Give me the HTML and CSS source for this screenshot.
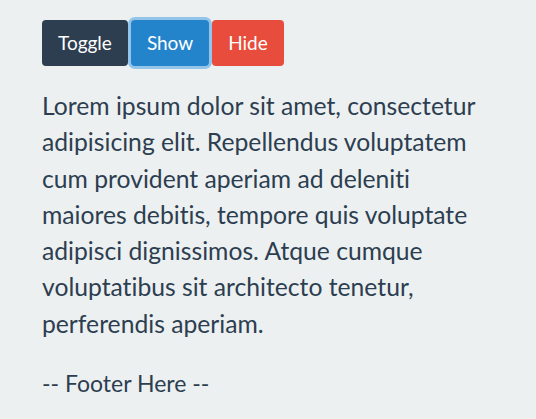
FILE: index.html
```html
<!DOCTYPE html>
<html>
<head>
<meta charset="utf-8">
<link rel="stylesheet" href="styles.css">
</head>
<body>
<div class="page">
  <div class="toolbar">
    <button class="btn btn-dark">Toggle</button>
    <button class="btn btn-blue focus">Show</button>
    <button class="btn btn-red">Hide</button>
  </div>
  <p class="text">Lorem ipsum dolor sit amet, consectetur adipisicing elit. Repellendus voluptatem cum provident aperiam ad deleniti maiores debitis, tempore quis voluptate adipisci dignissimos. Atque cumque voluptatibus sit architecto tenetur, perferendis aperiam.</p>
  <div class="footer">-- Footer Here --</div>
</div>
</body>
</html>
```
FILE: styles.css
```css
html, body {
  margin: 0;
  padding: 0;
  background: #ecf0f1;
}
body {
  font-family: Lato, "Open Sans", sans-serif;
  color: #2c3e50;
  font-variant-ligatures: none;
}
.page {
  padding: 20px 42px;
  width: 450px;
}
.toolbar {
  display: flex;
  gap: 3px;
}
.btn {
  font-family: Lato, sans-serif;
  font-size: 19px;
  line-height: 26px;
  height: 46px;
  padding: 0 16px;
  border: none;
  border-radius: 4px;
  color: #fff;
  font-variant-ligatures: none;
}
.btn-dark { background: #2c3e50; }
.btn-blue { background: #2384cc; }
.btn-red { background: #e74c3c; }
.focus {
  box-shadow: 0 0 0 3px #93c4ea;
}
.text {
  font-size: 24.7px;
  line-height: 36.3px;
  margin: 22px 0 0 0;
}
.footer {
  font-size: 23px;
  line-height: 36.3px;
  margin-top: 23px;
}
```
